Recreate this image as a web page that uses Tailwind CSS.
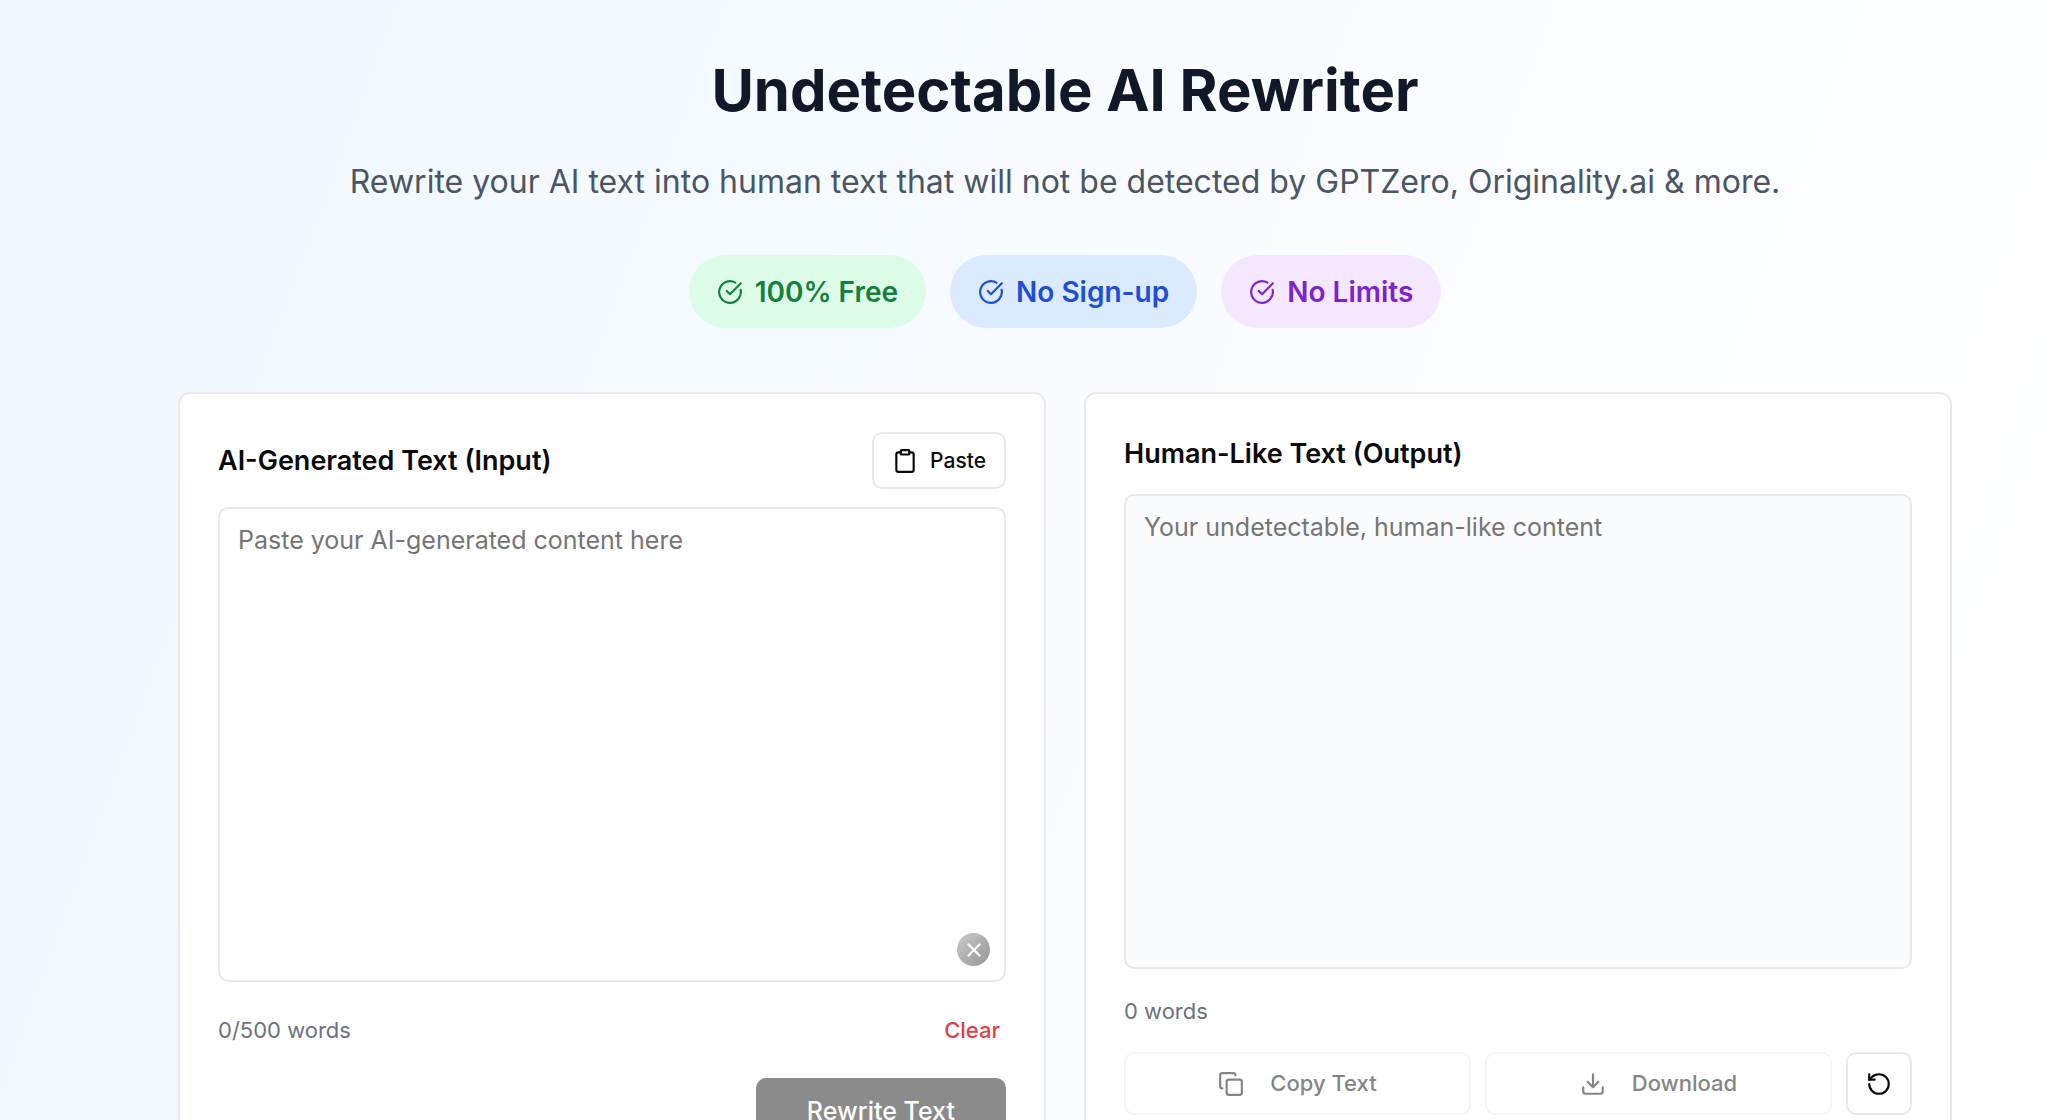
<!DOCTYPE html>
<html lang="en">
<head>
  <meta charset="UTF-8" />
  <meta name="viewport" content="width=device-width, initial-scale=1.0" />
  <title>Undetectable AI Rewriter</title>
  <script src="https://cdn.jsdelivr.net/npm/@tailwindcss/browser@4"></script>
</head>
<body class="font-['Inter',sans-serif] text-neutral-950">

  <main class="min-h-screen bg-[linear-gradient(110deg,#f1f6ff,#f0f8ff_10%,#f8fbff_48%,#fdfeff_80%,#fff)] pt-14 pb-10 pl-[178px] pr-24">

    <!-- Hero -->
    <header class="flex flex-col items-center text-center">
      <h1 class="text-[58px] leading-[68px] font-bold text-[#111827]">Undetectable AI Rewriter</h1>
      <p class="mt-9 text-[32px] leading-[44px] text-[#4b5563]">Rewrite your AI text into human text that will not be detected by GPTZero, Originality.ai &amp; more.</p>
      <ul class="mt-[51px] flex gap-6 text-[28px] leading-10 font-semibold">
        <li class="flex items-center gap-3 h-[73px] px-7 rounded-full bg-[#dcfce7] text-[#15803d]">
          <svg class="size-[26px]" viewBox="0 0 24 24" fill="none" stroke="currentColor" stroke-width="2" stroke-linecap="round" stroke-linejoin="round"><path d="M21.801 10A10 10 0 1 1 17 3.335" /><path d="m9 11 3 3L22 4" /></svg>
          100% Free
        </li>
        <li class="flex items-center gap-3 h-[73px] px-7 rounded-full bg-[#dbeafe] text-[#1d4ed8]">
          <svg class="size-[26px]" viewBox="0 0 24 24" fill="none" stroke="currentColor" stroke-width="2" stroke-linecap="round" stroke-linejoin="round"><path d="M21.801 10A10 10 0 1 1 17 3.335" /><path d="m9 11 3 3L22 4" /></svg>
          No Sign-up
        </li>
        <li class="flex items-center gap-3 h-[73px] px-7 rounded-full bg-[#f3e8ff] text-[#7e22ce]">
          <svg class="size-[26px]" viewBox="0 0 24 24" fill="none" stroke="currentColor" stroke-width="2" stroke-linecap="round" stroke-linejoin="round"><path d="M21.801 10A10 10 0 1 1 17 3.335" /><path d="m9 11 3 3L22 4" /></svg>
          No Limits
        </li>
      </ul>
    </header>

    <div class="mt-16 grid grid-cols-2 gap-[38px]">

      <!-- Input -->
      <section class="rounded-xl border-2 border-[#e9eaeb] bg-white p-[38px]">
        <div class="flex items-center justify-between">
          <label for="source" class="text-[27px] leading-9 font-semibold">AI-Generated Text (Input)</label>
          <button type="button" class="flex items-center gap-3 h-[57px] px-[18px] rounded-[10px] border-2 border-[#e9e9e9] text-[21px] font-medium">
            <svg class="size-[26px]" viewBox="0 0 24 24" fill="none" stroke="currentColor" stroke-width="2" stroke-linecap="round" stroke-linejoin="round"><rect width="8" height="4" x="8" y="2" rx="1" ry="1" /><path d="M16 4h2a2 2 0 0 1 2 2v14a2 2 0 0 1-2 2H6a2 2 0 0 1-2-2V6a2 2 0 0 1 2-2h2" /></svg>
            Paste
          </button>
        </div>
        <div class="relative mt-[18px]">
          <textarea id="source" placeholder="Paste your AI-generated content here" class="block w-full h-[475px] resize-none rounded-[10px] border-2 border-[#e9e9e9] px-[18px] py-[11px] text-[25px] leading-10 placeholder:text-[#757575]"></textarea>
          <button type="button" aria-label="Dismiss" class="absolute right-4 bottom-4 flex items-center justify-center size-[33px] rounded-full bg-linear-to-br from-[#cacaca] to-[#969696] text-white">
            <svg class="size-[22px]" viewBox="0 0 24 24" fill="none" stroke="currentColor" stroke-width="2.5" stroke-linecap="round"><path d="M18 6 6 18M6 6l12 12" /></svg>
          </button>
        </div>
        <div class="mt-8 flex items-center justify-between text-[22px] leading-8">
          <span class="text-[#6b7280]">0/500 words</span>
          <button type="button" class="px-1.5 font-medium text-[#df4048]">Clear</button>
        </div>
        <div class="mt-8 flex justify-end">
          <button type="button" disabled class="h-[68px] px-[51px] rounded-[10px] bg-[#8b8b8b] text-[25px] font-medium text-white">Rewrite Text</button>
        </div>
      </section>

      <!-- Output -->
      <section class="rounded-xl border-2 border-[#e9eaeb] bg-white p-[38px]">
        <label for="result" class="block mt-1 text-[27px] leading-9 font-semibold">Human-Like Text (Output)</label>
        <textarea id="result" readonly placeholder="Your undetectable, human-like content" class="block mt-[22px] w-full h-[475px] resize-none rounded-[10px] border-2 border-[#e9e9e9] bg-[#fafbfd] px-[18px] py-[11px] text-[25px] leading-10 placeholder:text-[#757575]"></textarea>
        <p class="mt-[26px] text-[22px] leading-8 text-[#6b7280]">0 words</p>
        <div class="mt-[25px] flex gap-3.5 text-[22px] font-medium">
          <button type="button" disabled class="flex flex-1 items-center justify-center gap-[26px] h-[63px] rounded-[10px] border-2 border-neutral-100 text-[#858585]">
            <svg class="size-[26px]" viewBox="0 0 24 24" fill="none" stroke="currentColor" stroke-width="2" stroke-linecap="round" stroke-linejoin="round"><rect width="14" height="14" x="8" y="8" rx="2" ry="2" /><path d="M4 16c-1.1 0-2-.9-2-2V4c0-1.1.9-2 2-2h10c1.1 0 2 .9 2 2" /></svg>
            Copy Text
          </button>
          <button type="button" disabled class="flex flex-1 items-center justify-center gap-[26px] h-[63px] rounded-[10px] border-2 border-neutral-100 text-[#858585]">
            <svg class="size-[26px]" viewBox="0 0 24 24" fill="none" stroke="currentColor" stroke-width="2" stroke-linecap="round" stroke-linejoin="round"><path d="M21 15v4a2 2 0 0 1-2 2H5a2 2 0 0 1-2-2v-4" /><path d="m7 10 5 5 5-5M12 15V3" /></svg>
            Download
          </button>
          <button type="button" aria-label="Reset" class="flex items-center justify-center w-[66px] h-[63px] rounded-[10px] border-2 border-[#e9e9e9]">
            <svg class="size-[26px]" viewBox="0 0 24 24" fill="none" stroke="currentColor" stroke-width="2" stroke-linecap="round" stroke-linejoin="round"><path d="M3 12a9 9 0 1 0 9-9 9.75 9.75 0 0 0-6.74 2.74L3 8" /><path d="M3 3v5h5" /></svg>
          </button>
        </div>
      </section>
    </div>
  </main>

</body>
</html>
